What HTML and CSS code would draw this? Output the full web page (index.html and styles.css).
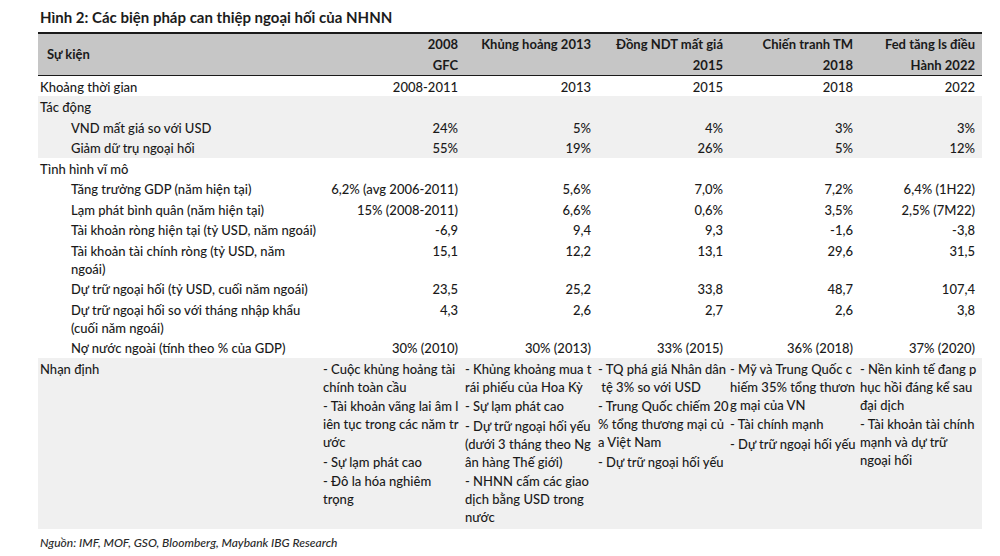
FILE: index.html
```html
<!DOCTYPE html>
<html lang="vi">
<head>
<meta charset="utf-8">
<title>Hình 2</title>
<link rel="stylesheet" href="styles.css">
</head>
<body>
<div class="fig">
  <h1 class="title">Hình 2: Các biện pháp can thiệp ngoại hối của NHNN</h1>
  <div class="table">
    <div class="row head">
      <div class="hlabel">Sự kiện</div>
      <div class="hcell">2008<br>GFC</div>
      <div class="hcell">Khủng hoảng 2013</div>
      <div class="hcell">Đồng NDT mất giá<br>2015</div>
      <div class="hcell">Chiến tranh TM<br>2018</div>
      <div class="hcell last">Fed tăng ls điều<br>Hành 2022</div>
    </div>

    <div class="row">
      <div class="label">Khoảng thời gian</div>
      <div class="val">2008-2011</div><div class="val">2013</div><div class="val">2015</div><div class="val">2018</div><div class="val last">2022</div>
    </div>

    <div class="band">
      <div class="row"><div class="label">Tác động</div></div>
      <div class="row">
        <div class="label sub">VND mất giá so với USD</div>
        <div class="val">24%</div><div class="val">5%</div><div class="val">4%</div><div class="val">3%</div><div class="val last">3%</div>
      </div>
      <div class="row">
        <div class="label sub">Giảm dữ trụ ngoại hối</div>
        <div class="val">55%</div><div class="val">19%</div><div class="val">26%</div><div class="val">5%</div><div class="val last">12%</div>
      </div>
    </div>

    <div class="row"><div class="label">Tình hình vĩ mô</div></div>
    <div class="row">
      <div class="label sub">Tăng trưởng GDP (năm hiện tại)</div>
      <div class="val">6,2% (avg 2006-2011)</div><div class="val">5,6%</div><div class="val">7,0%</div><div class="val">7,2%</div><div class="val last">6,4% (1H22)</div>
    </div>
    <div class="row">
      <div class="label sub">Lạm phát bình quân (năm hiện tại)</div>
      <div class="val">15% (2008-2011)</div><div class="val">6,6%</div><div class="val">0,6%</div><div class="val">3,5%</div><div class="val last">2,5% (7M22)</div>
    </div>
    <div class="row">
      <div class="label sub">Tài khoản ròng hiện tại (tỷ USD, năm ngoái)</div>
      <div class="val">-6,9</div><div class="val">9,4</div><div class="val">9,3</div><div class="val">-1,6</div><div class="val last">-3,8</div>
    </div>
    <div class="row">
      <div class="label sub">Tài khoản tài chính ròng (tỷ USD, năm<br>ngoái)</div>
      <div class="val">15,1</div><div class="val">12,2</div><div class="val">13,1</div><div class="val">29,6</div><div class="val last">31,5</div>
    </div>
    <div class="row">
      <div class="label sub">Dự trữ ngoại hối (tỷ USD, cuối năm ngoái)</div>
      <div class="val">23,5</div><div class="val">25,2</div><div class="val">33,8</div><div class="val">48,7</div><div class="val last">107,4</div>
    </div>
    <div class="row">
      <div class="label sub">Dự trữ ngoại hối so với tháng nhập khẩu<br>(cuối năm ngoái)</div>
      <div class="val">4,3</div><div class="val">2,6</div><div class="val">2,7</div><div class="val">2,6</div><div class="val last">3,8</div>
    </div>
    <div class="row">
      <div class="label sub">Nợ nước ngoài (tính theo % của GDP)</div>
      <div class="val">30% (2010)</div><div class="val">30% (2013)</div><div class="val">33% (2015)</div><div class="val">36% (2018)</div><div class="val last">37% (2020)</div>
    </div>

    <div class="band">
      <div class="row notes">
        <div class="label">Nhạn định</div>
        <div class="note">
          <p>- Cuộc khủng hoảng tài<br>chính toàn cầu</p>
          <p>- Tài khoản vãng lai âm l<br>iên tục trong các năm tr<br>ước</p>
          <p>- Sự lạm phát cao</p>
          <p>- Đô la hóa nghiêm<br>trọng</p>
        </div>
        <div class="note">
          <p>- Khủng khoảng mua t<br>rái phiếu của Hoa Kỳ</p>
          <p>- Sự lạm phát cao</p>
          <p>- Dự trữ ngoại hối yếu<br>(dưới 3 tháng theo Ng<br>ân hàng Thế giới)</p>
          <p>- NHNN cấm các giao<br>dịch bằng USD trong<br>nước</p>
        </div>
        <div class="note">
          <p>- TQ phá giá Nhân dân<br>&nbsp;tệ 3% so với USD</p>
          <p>- Trung Quốc chiếm 20<br>% tổng thương mại củ<br>a Việt Nam</p>
          <p>- Dự trữ ngoại hối yếu</p>
        </div>
        <div class="note">
          <p>- Mỹ và Trung Quốc c<br>hiếm 35% tổng thươn<br>g mại của VN</p>
          <p>- Tài chính mạnh</p>
          <p>- Dự trữ ngoại hối yếu</p>
        </div>
        <div class="note">
          <p>- Nền kinh tế đang p<br>hục hồi đáng kể sau<br>đại dịch</p>
          <p>- Tài khoản tài chính<br>mạnh và dự trữ<br>ngoại hối</p>
        </div>
      </div>
    </div>
  </div>
  <p class="source">Nguồn: IMF, MOF, GSO, Bloomberg, Maybank IBG Research</p>
</div>
</body>
</html>
```

FILE: styles.css
```css
html, body {
  margin: 0;
  padding: 0;
  background: #ffffff;
}

body {
  font-family: Lato, "Liberation Sans", sans-serif;
  color: #1a1a1a;
  font-size: 13px;
  font-weight: 500;
}

.fig {
  padding: 8px 0 0 38px;
  width: 944px;
}

.title {
  margin: 0 0 6px 2px;
  font-size: 15px;
  line-height: 18px;
  font-weight: 700;
  color: #1c1c1c;
}

.table {
  width: 944px;
}

.row {
  display: grid;
  grid-template-columns: 280px 142px 133px 132px 130px 127px;
  align-items: start;
}

.head {
  background: #c6c6c6;
  border-top: 2.5px solid #1a1a1a;
  border-bottom: 1.5px solid #1a1a1a;
  height: 40.5px;
  font-weight: 700;
  line-height: 20.5px;
  align-items: stretch;
}

.hlabel {
  padding-left: 9px;
  display: flex;
  align-items: center;
}

.hcell {
  text-align: right;
  padding-right: 2px;
  white-space: nowrap;
}

.hcell.last {
  padding-right: 7px;
}

.label,
.val {
  line-height: 18px;
  padding: 2px 0 0.5px;
  white-space: nowrap;
}

.label {
  padding-left: 2px;
}

.label.sub {
  padding-left: 33px;
}

.val {
  text-align: right;
  padding-right: 2px;
}

.val.last {
  padding-right: 7px;
}

.band {
  background: #f0f0f0;
}

.notes {
  padding-bottom: 1px;
}

.note {
  line-height: 18px;
  padding: 2px 0 0 5px;
  white-space: nowrap;
}

.note p {
  margin: 0 0 1.5px;
}

.source {
  margin: 6px 0 0 2px;
  font-size: 12px;
  font-style: italic;
  color: #2a2a2a;
}
```
